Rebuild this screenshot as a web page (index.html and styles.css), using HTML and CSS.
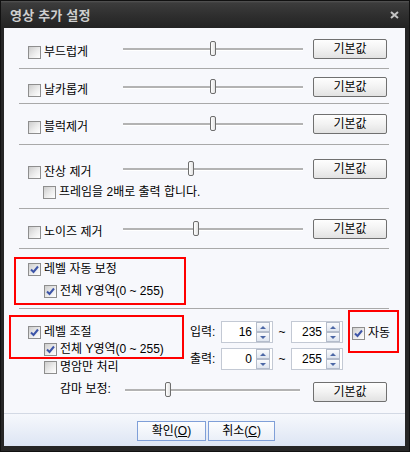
FILE: index.html
```html
<!DOCTYPE html>
<html lang="ko">
<head>
<meta charset="utf-8">
<title>영상 추가 설정</title>
<link rel="stylesheet" href="styles.css">
</head>
<body>
<div class="win">
  <div class="titlebar">
    <span class="title">영상 추가 설정</span>
    <svg class="close" width="9" height="8" viewBox="0 0 9 8"><path d="M1 1 L8 7 M8 1 L1 7" stroke="#c4c4c4" stroke-width="2"/></svg>
  </div>
  <div class="frame">
    <div class="client">
      <div class="sec s1">
        <div class="row">
          <label class="chk"><span class="box"></span>부드럽게</label>
          <div class="slider"><span class="thumb" style="left:87px"></span></div>
          <button class="btn">기본값</button>
        </div>
      </div>
      <div class="sec s2">
        <div class="row">
          <label class="chk"><span class="box"></span>날카롭게</label>
          <div class="slider"><span class="thumb" style="left:87px"></span></div>
          <button class="btn">기본값</button>
        </div>
      </div>
      <div class="sec s3">
        <div class="row">
          <label class="chk"><span class="box"></span>블럭제거</label>
          <div class="slider"><span class="thumb" style="left:87px"></span></div>
          <button class="btn">기본값</button>
        </div>
      </div>
      <div class="sec s4">
        <div class="row">
          <label class="chk"><span class="box"></span>잔상 제거</label>
          <div class="slider"><span class="thumb" style="left:65px"></span></div>
          <button class="btn">기본값</button>
        </div>
        <label class="chk sub"><span class="box"></span>프레임을 2배로 출력 합니다.</label>
      </div>
      <div class="sec s5">
        <div class="row">
          <label class="chk"><span class="box"></span>노이즈 제거</label>
          <div class="slider"><span class="thumb" style="left:70px"></span></div>
          <button class="btn">기본값</button>
        </div>
      </div>
      <div class="sec s6">
        <div class="red rb1">
          <label class="chk"><span class="box"><svg width="11" height="11" viewBox="0 0 11 11"><path d="M2 5.5 L4.5 8 L9 2.5" fill="none" stroke="#3d55a8" stroke-width="2"/></svg></span>레벨 자동 보정</label>
          <label class="chk ind"><span class="box"><svg width="11" height="11" viewBox="0 0 11 11"><path d="M2 5.5 L4.5 8 L9 2.5" fill="none" stroke="#3d55a8" stroke-width="2"/></svg></span>전체 Y영역(0 ~ 255)</label>
        </div>
      </div>
      <div class="lower">
        <div class="lcol">
          <div class="red rb2">
            <label class="chk"><span class="box"><svg width="11" height="11" viewBox="0 0 11 11"><path d="M2 5.5 L4.5 8 L9 2.5" fill="none" stroke="#3d55a8" stroke-width="2"/></svg></span>레벨 조절</label>
            <label class="chk ind2"><span class="box"><svg width="11" height="11" viewBox="0 0 11 11"><path d="M2 5.5 L4.5 8 L9 2.5" fill="none" stroke="#3d55a8" stroke-width="2"/></svg></span>전체 Y영역(0 ~ 255)</label>
          </div>
          <label class="chk dark"><span class="box"></span>명암만 처리</label>
        </div>
        <div class="mcol">
          <span class="flabel">입력:</span>
          <div class="spin"><span class="val">16</span><span class="arrows"><span class="ab up"></span><span class="ab dn"></span></span></div>
          <span class="tilde">~</span>
          <div class="spin"><span class="val">235</span><span class="arrows"><span class="ab up"></span><span class="ab dn"></span></span></div>
          <span class="flabel">출력:</span>
          <div class="spin"><span class="val">0</span><span class="arrows"><span class="ab up"></span><span class="ab dn"></span></span></div>
          <span class="tilde">~</span>
          <div class="spin"><span class="val">255</span><span class="arrows"><span class="ab up"></span><span class="ab dn"></span></span></div>
        </div>
        <div class="red rb3">
          <label class="chk"><span class="box"><svg width="11" height="11" viewBox="0 0 11 11"><path d="M2 5.5 L4.5 8 L9 2.5" fill="none" stroke="#3d55a8" stroke-width="2"/></svg></span>자동</label>
        </div>
      </div>
      <div class="grow">
        <span class="glabel">감마 보정:</span>
        <div class="slider gs"><span class="thumb" style="left:40px"></span></div>
        <button class="btn">기본값</button>
      </div>
      <div class="foot">
        <button class="fbtn ok">확인(<u>O</u>)</button>
        <button class="fbtn cancel">취소(<u>C</u>)</button>
      </div>
    </div>
  </div>
</div>
</body>
</html>
```
FILE: styles.css
```css
* { box-sizing: border-box; margin: 0; padding: 0; }
html, body { width: 410px; height: 452px; overflow: hidden; }
body {
  font-family: "Liberation Sans", "Noto Sans CJK KR", sans-serif;
  font-size: 12px;
  color: #000;
  background: #222;
}
.win {
  width: 410px;
  height: 452px;
  display: flex;
  flex-direction: column;
  background: #2b2b2b;
  border: 1px solid #111;
}
.titlebar {
  height: 27px;
  display: flex;
  align-items: center;
  justify-content: space-between;
  padding: 0 10px 1px 9px;
  background: linear-gradient(#555 0, #3c3c3c 2px, #2f2f2f 14px, #232323 27px);
}
.title {
  font-family: "Noto Sans CJK KR", sans-serif;
  font-weight: bold;
  font-size: 13px;
  color: #cfcfcf;
  letter-spacing: 0.2px;
}
.close { display: block; margin-top: 1px; }
.frame {
  flex: 1;
  padding: 0 4px 5px 3px;
  background: #262626;
  display: flex;
}
.client {
  flex: 1;
  height: 418px;
  background: #f7f8fc;
  display: flex;
  flex-direction: column;
}
.sec {
  margin: 0 16px 0 15px;
  border-bottom: 1px solid #a9a9a9;
}
.s1 { padding: 11px 0 9px; }
.s2 { padding: 8px 0 6px; }
.s3 { padding: 10px 0 10px; }
.s4 { padding: 14px 0 9px; }
.s5 { padding: 10px 0 9px; }
.s6 { padding: 8px 0 3px; }
.row {
  display: flex;
  align-items: flex-start;
  height: 20px;
  padding-left: 9px;
}
.chk {
  display: flex;
  align-items: center;
  gap: 3px;
  height: 13px;
  line-height: 13px;
  white-space: nowrap;
}
.row > .chk { width: 95px; margin-top: 7px; }
.box {
  flex: none;
  width: 13px;
  height: 13px;
  border: 1px solid #8e8e8e;
  background: linear-gradient(135deg, #cdcdcd, #ececec 55%, #fff);
  display: flex;
  align-items: center;
  justify-content: center;
}
.box svg { display: block; }
.slider {
  position: relative;
  width: 180px;
  height: 20px;
  flex: none;
}
.slider::before {
  content: "";
  position: absolute;
  left: 0;
  right: 0;
  top: 9px;
  height: 2px;
  background: #b3b3b3;
  box-shadow: 0 1px 0 #fff;
}
.thumb {
  position: absolute;
  top: 2px;
  width: 6px;
  height: 15px;
  border: 1px solid #6e6e6e;
  border-radius: 2px;
  background: linear-gradient(90deg, #fff, #e2e2e2);
}
.btn {
  flex: none;
  margin-left: 10px;
  width: 74px;
  height: 20px;
  border: 1px solid #707070;
  border-radius: 2px;
  background: linear-gradient(#fefefe, #f2f2f2 50%, #e2e2e2);
  font: inherit;
  color: #000;
  line-height: 18px;
  text-align: center;
}
.sub { margin: 7px 0 0 24px; }
.red { border: 2px solid #f00; }
.rb1 {
  width: 172px;
  height: 48px;
  margin-left: -5px;
  padding: 4px 0 0 12px;
}
.ind { margin: 9px 0 0 16px; }
.lower {
  display: flex;
  align-items: flex-start;
}
.lcol { margin: 6px 0 0 5px; width: 175px; flex: none; }
.rb2 {
  width: 175px;
  height: 44px;
  padding: 9px 0 0 17px;
}
.ind2 { margin: 4px 0 0 16px; }
.dark { margin: 2px 0 0 35px; }
.mcol {
  margin: 12px 0 0 6px;
  display: grid;
  grid-template-columns: 31px 52px 18px 52px;
  grid-auto-rows: 22px;
  row-gap: 5px;
  align-items: center;
}
.flabel { line-height: 14px; }
.tilde { text-align: center; line-height: 14px; }
.spin {
  height: 22px;
  border: 1px solid #c3c9d4;
  background: #fff;
  display: flex;
}
.val {
  flex: 1;
  text-align: right;
  padding-right: 4px;
  line-height: 20px;
}
.arrows {
  width: 16px;
  display: flex;
  flex-direction: column;
  padding: 0 2px 0 0;
}
.ab {
  height: 10px;
  border: 1px solid #b4bccb;
  background: linear-gradient(#fafbfd, #dfe5ef);
  display: flex;
  align-items: center;
  justify-content: center;
}
.ab::before {
  content: "";
  border-left: 3px solid transparent;
  border-right: 3px solid transparent;
}
.up::before { border-bottom: 3px solid #4d68a6; }
.dn::before { border-top: 3px solid #4d68a6; }
.rb3 {
  margin: 1px 0 0 5px;
  width: 51px;
  height: 43px;
  padding: 15px 0 0 2px;
}
.grow {
  display: flex;
  align-items: flex-start;
  margin-top: 8px;
  padding-left: 56px;
  height: 20px;
}
.glabel { width: 65px; line-height: 14px; flex: none; }
.slider.gs { width: 175px; margin-top: -2px; }
.grow .btn { margin-left: 13px; }
.foot {
  margin-top: auto;
  height: 33px;
  border-top: 1px solid #d3d9e4;
  background: linear-gradient(#f6f8fc, #dde5f4);
  display: flex;
  justify-content: center;
  gap: 2px;
  padding: 7px 0 0 3px;
}
.fbtn {
  height: 20px;
  border: 1px solid #7f9fd8;
  background: linear-gradient(#fcfdfe, #eaeff8);
  font: inherit;
  color: #000;
  line-height: 18px;
}
.ok { width: 69px; }
.cancel { width: 67px; }
```
